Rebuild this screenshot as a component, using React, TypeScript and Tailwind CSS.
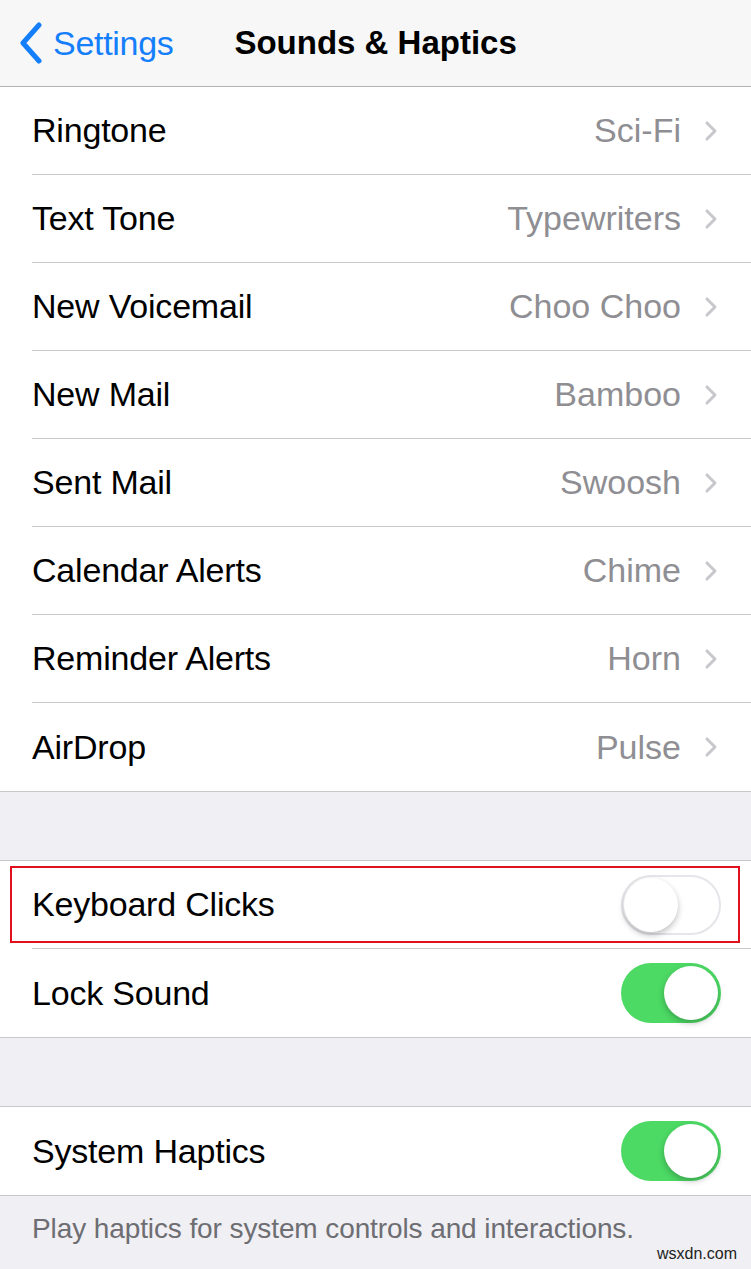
import { ChevronRight } from 'lucide-react'

const tones = [
  { label: 'Ringtone', value: 'Sci-Fi' },
  { label: 'Text Tone', value: 'Typewriters' },
  { label: 'New Voicemail', value: 'Choo Choo' },
  { label: 'New Mail', value: 'Bamboo' },
  { label: 'Sent Mail', value: 'Swoosh' },
  { label: 'Calendar Alerts', value: 'Chime' },
  { label: 'Reminder Alerts', value: 'Horn' },
  { label: 'AirDrop', value: 'Pulse' },
]

function Toggle({ on }: { on: boolean }) {
  return (
    <div
      className={
        on
          ? 'flex h-[60px] w-[100px] items-center justify-end rounded-full bg-[#4cd964] p-[3px]'
          : 'flex h-[60px] w-[100px] items-center justify-start rounded-full border-2 border-[#e5e5ea] bg-white p-px'
      }
    >
      <div className="h-[54px] w-[54px] rounded-full bg-white shadow-[0_3px_6px_rgba(0,0,0,0.25)]" />
    </div>
  )
}

function Row({ label, last, children }: { label: string; last?: boolean; children?: React.ReactNode }) {
  return (
    <div className="pl-8">
      <div
        className={
          'flex h-[88px] items-center pr-[30px] ' + (last ? '' : 'border-b border-[#c8c7cc]')
        }
      >
        <span className="flex-1 text-[34px] tracking-[-0.2px] text-black">{label}</span>
        {children}
      </div>
    </div>
  )
}

export default function App() {
  return (
    <div className="min-h-[1269px] bg-[#efeff4] font-['Liberation_Sans',Arial,sans-serif]">
      <div className="flex h-[87px] items-center border-b border-[#b2b2b2] bg-[#f7f7f7]">
        <div className="flex items-center pl-[19px] text-[#147efb]">
          <svg width="24" height="42" viewBox="0 0 24 42" fill="none">
            <path d="M20 3 L4 21 L20 39" stroke="currentColor" strokeWidth="5" strokeLinecap="round" strokeLinejoin="round" />
          </svg>
          <span className="ml-[10px] text-[34px] tracking-[-0.3px]">Settings</span>
        </div>
        <span className="ml-[61px] text-[33px] font-bold text-black">Sounds &amp; Haptics</span>
      </div>

      <div className="border-b border-[#c8c7cc] bg-white">
        {tones.map((t, i) => (
          <Row key={t.label} label={t.label} last={i === tones.length - 1}>
            <span className="text-[34px] text-[#8e8e93]">{t.value}</span>
            <ChevronRight className="ml-[14px] mr-[-6px] h-[32px] w-[32px] text-[#c7c7cc]" strokeWidth={2.3} />
          </Row>
        ))}
      </div>

      <div className="h-[68px]" />

      <div className="border-y border-[#c8c7cc] bg-white">
        <div className="relative">
          <Row label="Keyboard Clicks">
            <Toggle on={false} />
          </Row>
          <div className="absolute left-[10px] right-[11px] top-[5px] bottom-[6px] border-2 border-[#e0101e]" />
        </div>
        <Row label="Lock Sound" last>
          <Toggle on />
        </Row>
      </div>

      <div className="h-[68px]" />

      <div className="border-y border-[#c8c7cc] bg-white">
        <Row label="System Haptics" last>
          <Toggle on />
        </Row>
      </div>

      <div className="relative px-8 pt-[12px]">
        <p className="text-[28px] tracking-[-0.1px] text-[#6d6d72]">Play haptics for system controls and interactions.</p>
        <span className="absolute right-[14px] top-[48px] text-[16px] leading-[20px] text-[#222]">wsxdn.com</span>
      </div>
    </div>
  )
}
